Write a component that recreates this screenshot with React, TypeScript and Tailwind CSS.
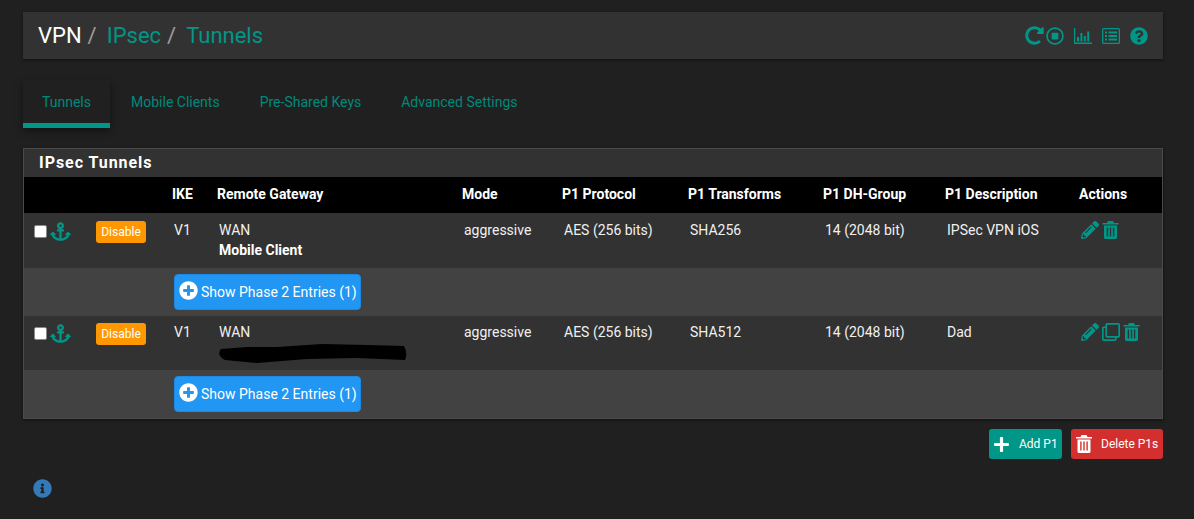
import React from "react";
import { FaRedoAlt, FaRegStopCircle, FaQuestionCircle, FaAnchor, FaPencilAlt, FaRegClone, FaPlusCircle, FaPlus, FaInfoCircle } from "react-icons/fa";

const Trash = ({ className = "" }: { className?: string }) => (
  <svg viewBox="0 0 16 18" className={className} fill="currentColor">
    <path fillRule="evenodd" d="M5.5 0h5L11.5 2H16v1.5H0V2h4.5zM1.5 4.5h13V16.5a1.5 1.5 0 0 1-1.5 1.5H3a1.5 1.5 0 0 1-1.5-1.5zM4.2 6.5v9h1.4v-9zM7.3 6.5v9h1.4v-9zM10.4 6.5v9h1.4v-9z" />
  </svg>
);

const BarChart = ({ className = "" }: { className?: string }) => (
  <svg viewBox="0 0 18 16" className={className} fill="currentColor">
    <path d="M0 0h1.2v14.6H18V16H0zM3 9h2v4.5H3zM6.4 5h2v8.5h-2zM9.8 8h2v5.5h-2zM13.2 3.5h2v10h-2z" />
  </svg>
);

const ListAlt = ({ className = "" }: { className?: string }) => (
  <svg viewBox="0 0 18 16" className={className} fill="currentColor">
    <path fillRule="evenodd" d="M1.5 0h15A1.5 1.5 0 0 1 18 1.5v13a1.5 1.5 0 0 1-1.5 1.5h-15A1.5 1.5 0 0 1 0 14.5v-13A1.5 1.5 0 0 1 1.5 0zM1.3 1.3v13.4h15.4V1.3zM3 3.5h2v2H3zM6.5 3.5h8.5v2H6.5zM3 7h2v2H3zM6.5 7h8.5v2H6.5zM3 10.5h2v2H3zM6.5 10.5h8.5v2H6.5z" />
  </svg>
);

const cols = [65, 78, 45, 245, 100, 126, 135, 122, 134, 88];

const Check = () => (
  <span className="inline-block w-[13px] h-[13px] bg-white rounded-[2px] border border-[#8a8a8a]" />
);

const Row = ({ h, pad, gateway, transform, desc, clone }: { h: string; pad: string; gateway: React.ReactNode; transform: string; desc: string; clone?: boolean }) => (
  <tr className={`${h} bg-[#323232] align-top`}>
    <td className={`${pad} pl-[10px]`}>
      <div className="flex items-center gap-[3px] mt-[2px]">
        <Check />
        <FaAnchor className="text-[#009688] w-[21px] h-[19px]" />
      </div>
    </td>
    <td className={`${pad} pl-[7px]`}>
      <span className="inline-flex items-center justify-center w-[50px] h-[22px] mt-[1px] bg-[#ff9800] rounded-[3px] text-white text-[12px]">Disable</span>
    </td>
    <td className={`${pad} pl-[7px]`}>V1</td>
    <td className={`${pad} pl-[7px]`}>{gateway}</td>
    <td className={`${pad} pl-[7px]`}>aggressive</td>
    <td className={`${pad} pl-[7px]`}>AES (256 bits)</td>
    <td className={`${pad} pl-[7px]`}>{transform}</td>
    <td className={`${pad} pl-[7px]`}>14 (2048 bit)</td>
    <td className={`${pad} pl-[7px]`}>{desc}</td>
    <td className={`${pad} pl-[7px]`}>
      <div className="flex items-center gap-[3px] text-[#009688] mt-[1px]">
        <FaPencilAlt className="w-[18px] h-[18px]" />
        {clone && <FaRegClone className="w-[18px] h-[18px]" />}
        <Trash className="w-[17px] h-[18px]" />
      </div>
    </td>
  </tr>
);

const DetailRow = ({ h }: { h: string }) => (
  <tr className={`${h} bg-[#424242] align-top`}>
    <td />
    <td />
    <td colSpan={8} className="pt-[6px] pl-[7px]">
      <span className="inline-flex items-center w-[187px] h-[36px] bg-[#2196f3] rounded-[4px] border border-[#1e88e5] pl-[4px] gap-[3px] text-white text-[14px]">
        <FaPlusCircle className="w-[19px] h-[19px] -mt-[3px]" />
        Show Phase 2 Entries (1)
      </span>
    </td>
  </tr>
);

export default function App() {
  const th = "text-left font-bold pl-[5px] pb-[2px] text-white text-[14px]";
  return (
    <div className="min-h-[519px] bg-[#202020] text-[#f0f0f0] text-[14px] pl-[23px] pr-[31px] pt-[12px] font-['Roboto',sans-serif] overflow-hidden">
      <div className="h-[47px] bg-[#323232] shadow-[0_1px_3px_rgba(0,0,0,0.5)] flex items-center justify-between pl-[15px] pr-[15px]">
        <div className="text-[22px] flex items-center leading-none">
          <span className="text-white">VPN</span>
          <span className="text-[#9e9e9e] ml-[6px]">/</span>
          <span className="text-[#009688] ml-[10px]">IPsec</span>
          <span className="text-[#9e9e9e] ml-[6px]">/</span>
          <span className="text-[#009688] ml-[10px]">Tunnels</span>
        </div>
        <div className="flex items-center text-[#009688]">
          <FaRedoAlt className="w-[19px] h-[19px] mr-[2px]" />
          <FaRegStopCircle className="w-[18px] h-[18px] mr-[10px]" />
          <BarChart className="w-[18px] h-[16px] mr-[10px]" />
          <ListAlt className="w-[18px] h-[16px] mr-[10px]" />
          <FaQuestionCircle className="w-[18px] h-[18px]" />
        </div>
      </div>

      <div className="mt-[21px] h-[48px] flex text-[#00897b] text-[14px]">
        <div className="w-[87px] h-[48px] border-b-[5px] border-[#009688] flex items-center justify-center pt-[1px] shadow-[0_3px_8px_rgba(0,0,0,0.45)]">Tunnels</div>
        <div className="px-[21px] flex items-center h-[44px]">Mobile Clients</div>
        <div className="px-[19px] flex items-center h-[44px]">Pre-Shared Keys</div>
        <div className="px-[21px] flex items-center h-[44px]">Advanced Settings</div>
      </div>

      <div className="mt-[20px] border border-[#4a4a4a] bg-[#323232] shadow-[0_1px_3px_rgba(0,0,0,0.5)]">
        <div className="h-[28px] pl-[15px] flex items-center font-bold text-[16px] tracking-[0.95px] text-white">IPsec Tunnels</div>
        <table className="w-full table-fixed border-collapse">
          <colgroup>
            {cols.map((c, i) => (
              <col key={i} style={{ width: c }} />
            ))}
          </colgroup>
          <thead>
            <tr className="h-[36px] bg-black">
              <th />
              <th />
              <th className={th}>IKE</th>
              <th className={th}>Remote Gateway</th>
              <th className={th}>Mode</th>
              <th className={th}>P1 Protocol</th>
              <th className={th}>P1 Transforms</th>
              <th className={th}>P1 DH-Group</th>
              <th className={th}>P1 Description</th>
              <th className={th}>Actions</th>
            </tr>
          </thead>
          <tbody>
            <Row
              h="h-[55px]"
              pad="pt-[7px]"
              transform="SHA256"
              desc="IPSec VPN iOS"
              gateway={
                <>
                  <div>WAN</div>
                  <div className="font-bold text-white -mt-[1px]">Mobile Client</div>
                </>
              }
            />
            <DetailRow h="h-[48px]" />
            <Row
              h="h-[54px]"
              pad="pt-[6px]"
              transform="SHA512"
              desc="Dad"
              clone
              gateway={
                <>
                  <div>WAN</div>
                  <svg viewBox="0 0 190 20" className="w-[190px] h-[20px] -ml-[2px]">
                    <path d="M4 6 L30 4 L60 4 L105 1 L150 2 L187 3 Q191 10 188 17 L140 15 L90 16 L40 20 L8 17 Q-1 12 4 6Z" fill="#000" />
                  </svg>
                </>
              }
            />
            <DetailRow h="h-[48px]" />
          </tbody>
        </table>
      </div>

      <div className="mt-[10px] flex justify-end gap-[9px] text-white text-[12px]">
        <div className="w-[73px] h-[30px] bg-[#009688] rounded-[3px] flex items-center pl-[4px] gap-[9px]">
          <FaPlus className="w-[17px] h-[17px]" />
          Add P1
        </div>
        <div className="w-[92px] h-[30px] bg-[#d32f2f] rounded-[3px] flex items-center pl-[5px] gap-[9px]">
          <Trash className="w-[16px] h-[18px]" />
          Delete P1s
        </div>
      </div>

      <div className="mt-[20px] pl-[10px]">
        <FaInfoCircle className="w-[19px] h-[19px] text-[#337ab7]" />
      </div>
    </div>
  );
}
